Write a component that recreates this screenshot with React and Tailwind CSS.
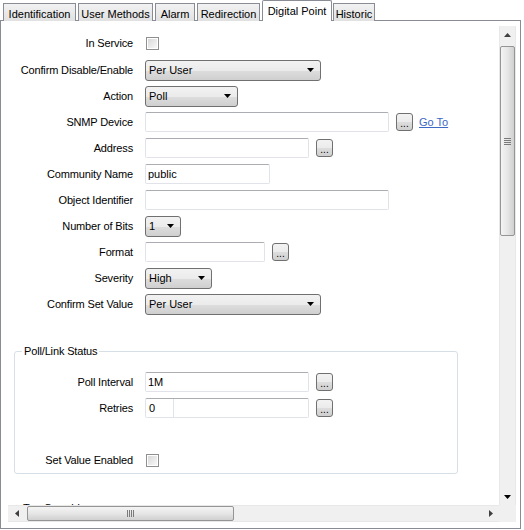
import React from "react";

const btnBg =
  "bg-[linear-gradient(#f2f2f2_0%,#ebebeb_50%,#dddddd_51%,#cfcfcf_100%)]";

function Arrow() {
  return (
    <svg width="7" height="4" viewBox="0 0 7 4" className="shrink-0">
      <path d="M0 0h7L3.5 4z" fill="#000" />
    </svg>
  );
}

function Select({ value, w }) {
  return (
    <div className={`${w} h-[21px] border border-[#707070] rounded-[3px] ${btnBg} flex items-center justify-between pl-[3px] pr-[6px]`}>
      <span>{value}</span>
      <Arrow />
    </div>
  );
}

function Input({ value, w, split }) {
  return (
    <div className={`${w} h-[20px] border border-[#e2e3ea] border-t-[#abadb3] rounded-[2px] bg-white flex items-center`}>
      {split ? (
        <span className="w-[28px] h-full pl-[3px] border-r border-[#e2e3ea] flex items-center">{value}</span>
      ) : (
        <span className="pl-[2px]">{value}</span>
      )}
    </div>
  );
}

function Dots() {
  return (
    <div className={`w-[17px] h-[18px] border border-[#707070] rounded-[3px] ${btnBg} flex items-end justify-center text-[10px] leading-[12px]`}>
      ...
    </div>
  );
}

function Check() {
  return (
    <div className="ml-[1px] w-[13px] h-[13px] border border-[#8e8f8f] bg-white p-[1px]">
      <div className="w-full h-full bg-gradient-to-br from-[#d8d8d8] to-[#f8f8f8]" />
    </div>
  );
}

function Row({ label, lw = "w-[125px]", h = "h-[26px]", children }) {
  return (
    <div className={`flex items-center ${h}`}>
      <div className={`${lw} shrink-0 text-right whitespace-nowrap tracking-[-0.15px]`}>{label}</div>
      <div className="ml-[12px] flex items-center gap-[7px]">{children}</div>
    </div>
  );
}

const tabs = [
  { name: "Identification", cls: "ml-[3px] w-[73px]" },
  { name: "User Methods", cls: "ml-[2px] w-[75px]" },
  { name: "Alarm", cls: "ml-[2px] w-[40px]" },
  { name: "Redirection", cls: "ml-[2px] w-[63px]" },
  { name: "Digital Point", cls: "ml-[2px] w-[70px]", active: true },
  { name: "Historic", cls: "ml-[1px] w-[42px]" },
];

export default function App() {
  return (
    <div className="w-[524px] h-[530px] bg-white text-[11px] leading-[13px] text-black font-['Liberation_Sans',Arial,sans-serif] overflow-hidden">
      {/* tabs */}
      <div className="flex items-end h-[21px] relative z-10">
        {tabs.map((t) =>
          t.active ? (
            <div key={t.name} className={`${t.cls} h-[21px] border border-b-0 border-[#898c95] bg-white flex justify-center pt-[4px] rounded-t-[2px]`}>
              {t.name}
            </div>
          ) : (
            <div key={t.name} className={`${t.cls} h-[18px] border border-b-0 border-[#898c95] bg-gradient-to-b from-[#f2f2f2] to-[#e1e1e1] flex justify-center pt-[4px]`}>
              {t.name}
            </div>
          )
        )}
      </div>

      {/* panel */}
      <div className="-mt-px w-[521px] h-[509px] border border-[#898c95] flex flex-col pl-[7px] pr-[4px] pb-[6px]">
        <div className="flex flex-1 min-h-0">
          {/* scroll content */}
          <div className="flex-1 overflow-hidden pt-[9px]">
            <Row label="In Service" h="h-[27px]"><Check /></Row>
            <Row label="Confirm Disable/Enable"><Select value="Per User" w="w-[176px]" /></Row>
            <Row label="Action"><Select value="Poll" w="w-[93px]" /></Row>
            <Row label="SNMP Device">
              <Input w="w-[244px]" />
              <Dots />
              <span className="-ml-[1px] text-[#3d68c4] underline">Go To</span>
            </Row>
            <Row label="Address"><Input w="w-[164px]" /><Dots /></Row>
            <Row label="Community Name"><Input w="w-[125px]" value="public" /></Row>
            <Row label="Object Identifier"><Input w="w-[244px]" /></Row>
            <Row label="Number of Bits"><Select value="1" w="w-[36px]" /></Row>
            <Row label="Format"><Input w="w-[120px]" /><Dots /></Row>
            <Row label="Severity"><Select value="High" w="w-[67px]" /></Row>
            <Row label="Confirm Set Value"><Select value="Per User" w="w-[176px]" /></Row>

            {/* group box */}
            <div className="relative mt-[34px] ml-[6px] w-[444px] border border-[#d5dfe5] rounded-[3px] pt-[17px]">
              <span className="absolute -top-[7px] left-[7px] bg-white px-[2px] tracking-[-0.15px]">Poll/Link Status</span>
              <Row label="Poll Interval" lw="w-[118px]"><Input w="w-[164px]" value="1M" /><Dots /></Row>
              <Row label="Retries" lw="w-[118px]"><Input w="w-[164px]" value="0" split /><Dots /></Row>
              <div className="h-[26px]" />
              <Row label="Set Value Enabled" lw="w-[118px]"><Check /></Row>
            </div>
            <div className="mt-[28px] ml-[15px]">Tag Overrides</div>
          </div>

          {/* vertical scrollbar */}
          <div className="w-[17px] mt-[5px] bg-[#f0f0f0] border-x border-[#e8e8e8] flex flex-col items-center">
            <div className="h-[17px] w-full flex items-center justify-center">
              <svg width="7" height="4" viewBox="0 0 7 4"><path d="M0 4h7L3.5 0z" fill="#404040" /></svg>
            </div>
            <div className="mt-[3px] h-[190px] w-[15px] border border-[#959595] rounded-[2px] bg-gradient-to-r from-[#f4f4f4] via-[#e6e6e6] to-[#d0d0d0] flex items-center justify-center">
              <div className="flex flex-col gap-[1px]">
                <div className="w-[7px] h-px bg-[#7a7a7a]" />
                <div className="w-[7px] h-px bg-[#7a7a7a]" />
                <div className="w-[7px] h-px bg-[#7a7a7a]" />
                <div className="w-[7px] h-px bg-[#7a7a7a]" />
              </div>
            </div>
            <div className="flex-1" />
            <div className="h-[17px] w-full flex items-center justify-center">
              <Arrow />
            </div>
          </div>
        </div>

        {/* horizontal scrollbar */}
        <div className="flex h-[17px] shrink-0">
          <div className="flex-1 bg-[#f0f0f0] border-y border-[#e8e8e8] flex items-center">
            <div className="w-[17px] h-full flex items-center justify-center">
              <svg width="4" height="7" viewBox="0 0 4 7"><path d="M4 0v7L0 3.5z" fill="#404040" /></svg>
            </div>
            <div className="ml-[2px] w-[207px] h-[15px] border border-[#959595] rounded-[2px] bg-gradient-to-b from-[#f4f4f4] via-[#e6e6e6] to-[#d0d0d0] flex items-center justify-center">
              <div className="flex gap-[1px]">
                <div className="w-px h-[7px] bg-[#7a7a7a]" />
                <div className="w-px h-[7px] bg-[#7a7a7a]" />
                <div className="w-px h-[7px] bg-[#7a7a7a]" />
                <div className="w-px h-[7px] bg-[#7a7a7a]" />
              </div>
            </div>
            <div className="flex-1" />
            <div className="w-[17px] h-full flex items-center justify-center">
              <svg width="4" height="7" viewBox="0 0 4 7"><path d="M0 0v7L4 3.5z" fill="#404040" /></svg>
            </div>
          </div>
          <div className="w-[17px] bg-[#f0f0f0]" />
        </div>
      </div>
    </div>
  );
}
